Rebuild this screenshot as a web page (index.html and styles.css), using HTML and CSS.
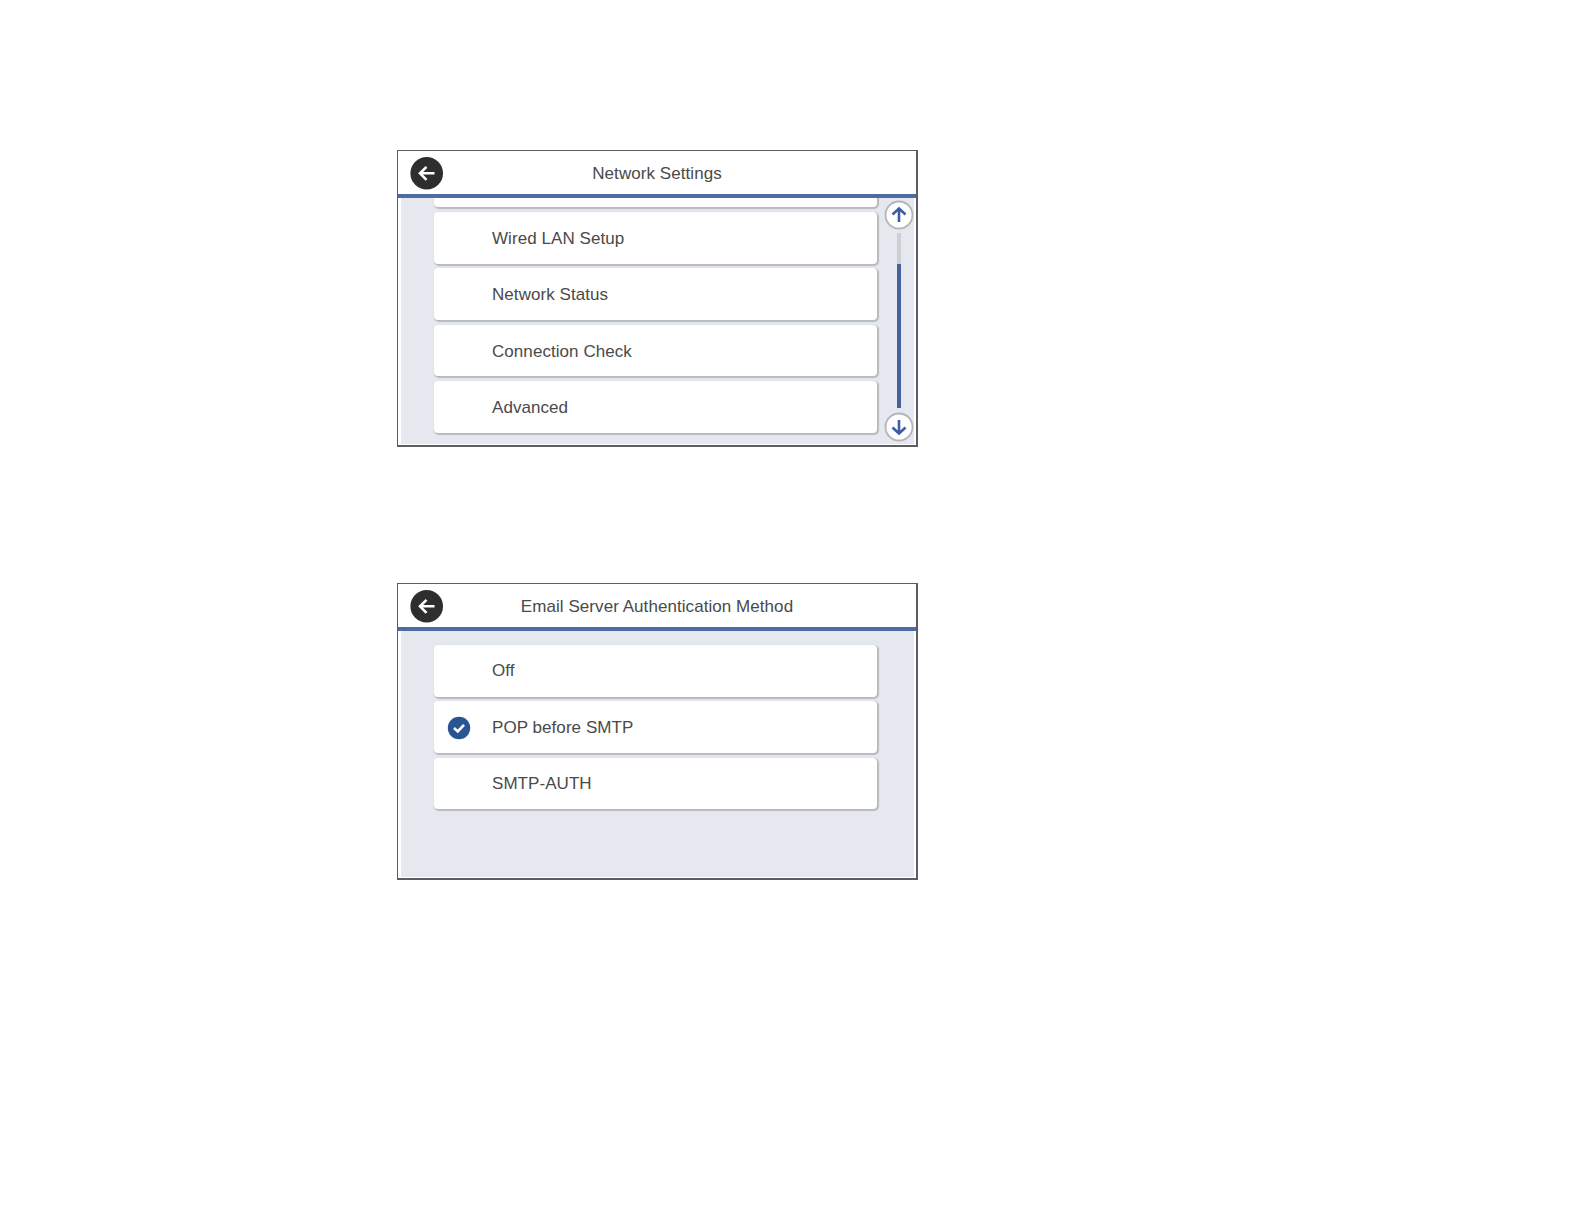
FILE: index.html
```html
<!DOCTYPE html>
<html lang="en">
<head>
    <meta charset="UTF-8">
    <meta name="viewport" content="width=device-width, initial-scale=1.0">
    <title>Network Settings</title>
    <link rel="stylesheet" href="styles.css">
</head>
<body>
    <!-- Network settings menu -->
    <section class="screen">
        <header class="header">
            <button class="back" aria-label="Back">
                <svg width="34" height="34" viewBox="0 0 34 34">
                    <circle cx="16.7" cy="17.3" r="16.3"/>
                    <path d="M24.5 17.3H10.5M16.5 10.8L10 17.3L16.5 23.8"/>
                </svg>
            </button>
            <h1>Network Settings</h1>
        </header>
        <div class="content scrolled">
            <ul class="menu">
                <li class="item"></li>
                <li class="item">Wired LAN Setup</li>
                <li class="item">Network Status</li>
                <li class="item">Connection Check</li>
                <li class="item">Advanced</li>
            </ul>
            <div class="scroll">
                <button class="arrow" aria-label="Up">
                    <svg width="30" height="30" viewBox="0 0 30 30">
                        <circle cx="15" cy="15" r="13.5"/>
                        <path d="M15 22V9M8.5 14.5L15 8.5L21.5 14.5"/>
                    </svg>
                </button>
                <div class="track"><div class="thumb"></div></div>
                <button class="arrow" aria-label="Down">
                    <svg width="30" height="30" viewBox="0 0 30 30">
                        <circle cx="15" cy="15" r="13.5"/>
                        <path d="M15 8V21M8.5 15.5L15 21.5L21.5 15.5"/>
                    </svg>
                </button>
            </div>
        </div>
    </section>

    <!-- Authentication method menu -->
    <section class="screen">
        <header class="header">
            <button class="back" aria-label="Back">
                <svg width="34" height="34" viewBox="0 0 34 34">
                    <circle cx="16.7" cy="17.3" r="16.3"/>
                    <path d="M24.5 17.3H10.5M16.5 10.8L10 17.3L16.5 23.8"/>
                </svg>
            </button>
            <h1>Email Server Authentication Method</h1>
        </header>
        <div class="content">
            <ul class="menu">
                <li class="item">Off</li>
                <li class="item selected">
                    <svg class="check" width="24" height="24" viewBox="0 0 24 24">
                        <circle cx="12" cy="12" r="11.2"/>
                        <path d="M7 12L10.8 15.5L17 8.8"/>
                    </svg>
                    POP before SMTP
                </li>
                <li class="item">SMTP-AUTH</li>
            </ul>
        </div>
    </section>
</body>
</html>
```

FILE: styles.css
```css
* {
    box-sizing: border-box;
}

body {
    font-family: "Liberation Sans", Arial, sans-serif;
    font-size: 17px;
    letter-spacing: 0.06px;
    color: #4a4a4a;
    background-color: #fff;
    margin: 0;
    padding: 150px 0 0 397px;
    display: flex;
    flex-direction: column;
    gap: 136px;
}

.screen {
    width: 521px;
    height: 297px;
    border: solid #5c5d60;
    border-width: 1px 2px 2px 1px;
    display: flex;
    flex-direction: column;
}

.header {
    flex: none;
    height: 47px;
    border-bottom: 4px solid #4f6ca0;
    display: grid;
    grid-template-columns: 34px 1fr 34px;
    align-items: center;
    padding: 0 12px;
}

h1 {
    font-size: 17px;
    font-weight: normal;
    text-align: center;
    margin: 0;
    padding-top: 2px;
}

button {
    background: none;
    border: none;
    padding: 0;
    display: block;
}

svg {
    display: block;
    fill: none;
}

.back circle {
    fill: #2e2e2e;
}

.back path {
    stroke: #fff;
    stroke-width: 2.6;
}

.content {
    flex: 1;
    min-height: 0;
    display: flex;
    background-color: #e5e8ee;
    border: solid #fff;
    border-width: 0 2px 1px 3px;
    padding: 14px 0 0 33px;
    overflow: hidden;
}

/* the first row is mostly scrolled out of view */
.scrolled {
    padding-top: 0;
}

.scrolled .menu {
    margin-top: -42.4px;
}

.menu {
    list-style: none;
    margin: 0;
    padding: 0;
    width: 443px;
    display: flex;
    flex-direction: column;
    gap: 4.9px;
}

.item {
    flex: none;
    height: 51.5px;
    padding: 1px 0 0 58px;
    display: flex;
    align-items: center;
    background-color: #fff;
    border-radius: 4px;
    box-shadow: 1px 1px 1px 1px #b7babc;
}

.scrolled .item {
    padding-top: 2px;
}

.selected {
    padding-left: 13px;
}

.check {
    margin-right: 21px;
}

.check circle {
    fill: #2b5591;
}

.check path {
    stroke: #fff;
    stroke-width: 2.6;
}

.scroll {
    margin-left: 7px;
    padding: 2px 0;
    display: flex;
    flex-direction: column;
    align-items: center;
}

.arrow circle {
    fill: #fff;
    stroke: #b3b5b7;
    stroke-width: 1.8;
}

.arrow path {
    stroke: #3a5ea6;
    stroke-width: 2.6;
}

.track {
    flex: 1;
    width: 4px;
    margin: 3px 0 4px;
    padding-top: 31px;
    background-color: #cdcfd3;
}

.thumb {
    height: 100%;
    background-color: #436299;
}
```
